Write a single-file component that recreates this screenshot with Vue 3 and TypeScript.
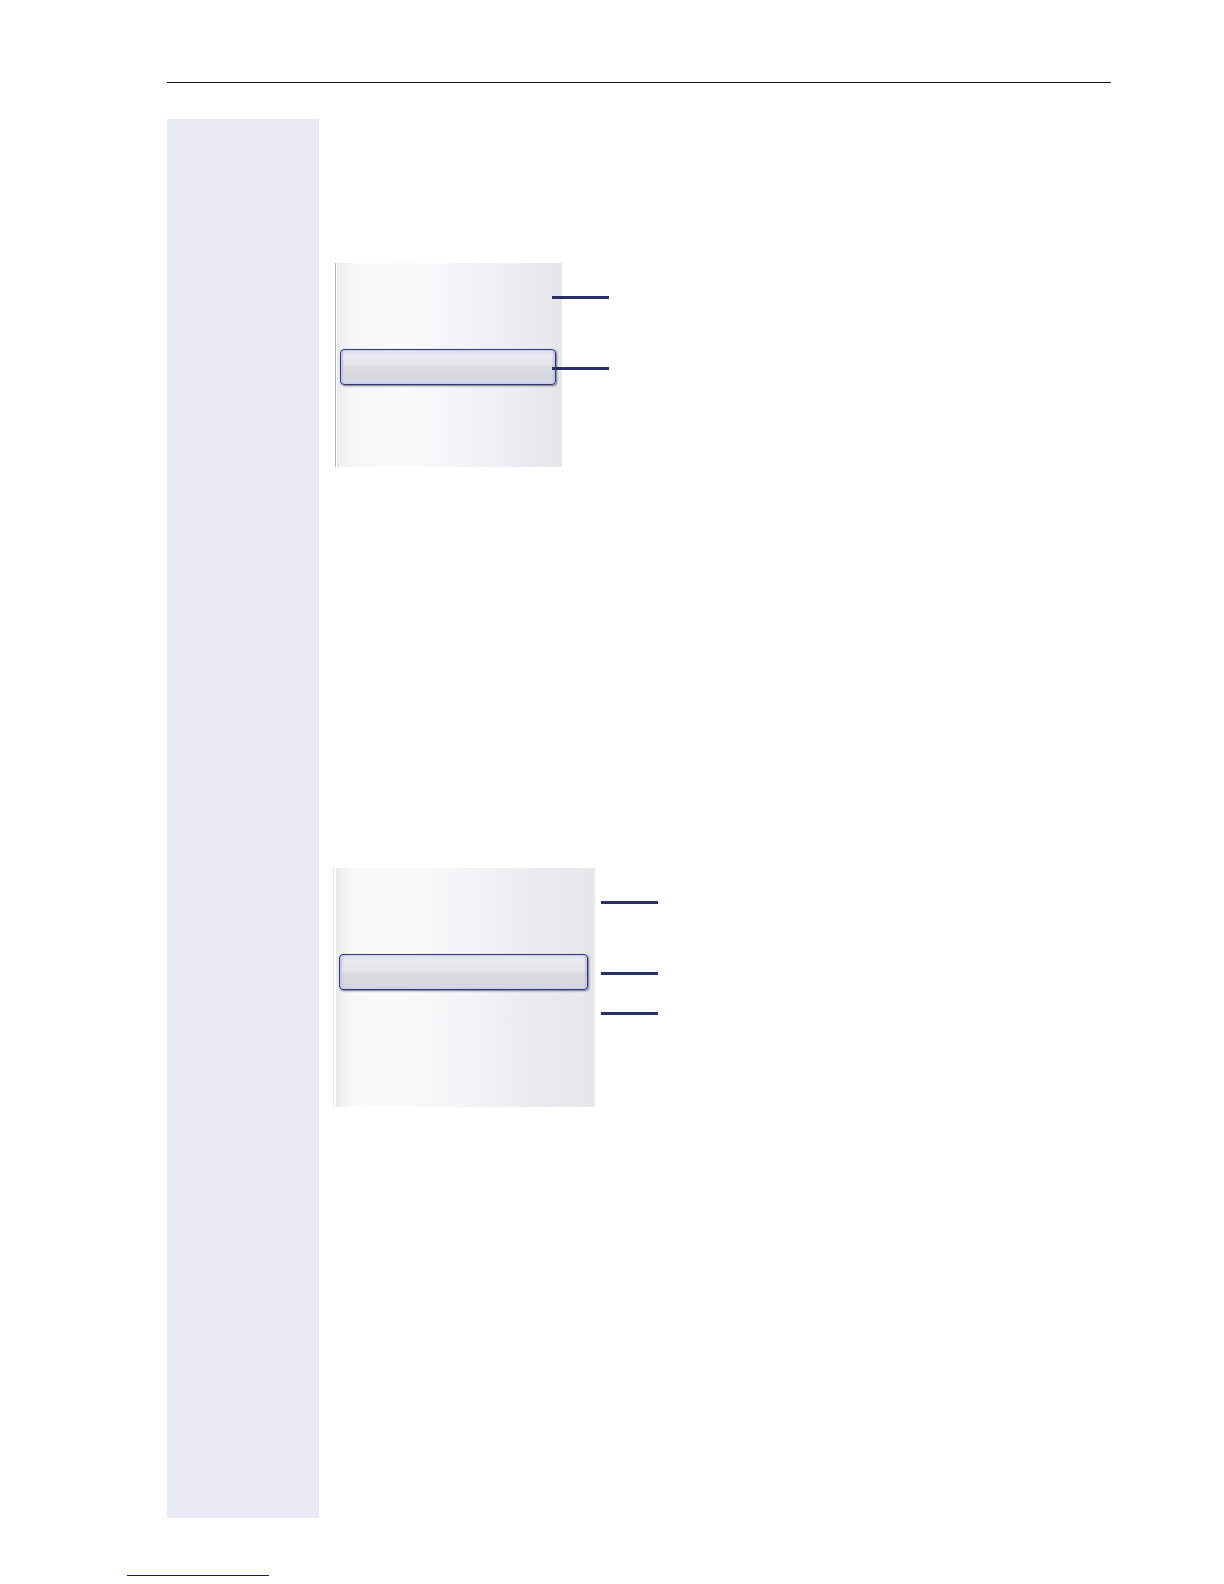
<script setup lang="ts">
interface MenuFigure {
  id: string
  callouts: string[]
}

const figures: MenuFigure[] = [
  { id: 'compact', callouts: ['heading', 'selected'] },
  { id: 'wide', callouts: ['heading', 'selected', 'entry'] },
]
</script>

<template>
  <div class="page">
    <hr class="rule" />
    <main class="body">
      <aside class="sidebar"></aside>
      <section class="content">
        <div v-for="figure in figures" :key="figure.id" class="figure" :class="figure.id">
          <div class="panel">
            <button type="button" class="item" aria-label="Selected entry"></button>
          </div>
          <div class="callouts">
            <span v-for="name in figure.callouts" :key="name" class="callout" :class="name"></span>
          </div>
        </div>
      </section>
    </main>
    <footer class="footer">
      <div class="footer-line"></div>
    </footer>
  </div>
</template>

<style>
body {
  margin: 0;
  background: #fff;
}
</style>

<style scoped>
.page {
  display: flex;
  flex-direction: column;
  min-height: 100vh;
  box-sizing: border-box;
  padding: 82px 113px 8px 127px;
  font-family: "Liberation Sans", Arial, sans-serif;
}

.rule {
  box-sizing: border-box;
  align-self: stretch;
  height: 1px;
  margin: 0 0 36px 40px;
  border: 0;
  background: #111116;
}

.body {
  display: flex;
  flex: 1;
  margin-left: 40px;
}

.sidebar {
  flex: 0 0 152px;
  background: #e8ebf4;
}

.content {
  flex: 1;
  padding-top: 144px;
}

.figure {
  display: flex;
  align-items: flex-start;
}

.panel {
  box-sizing: border-box;
  border-left: 1px solid #b2b2b4;
  background:
    linear-gradient(to right, #fff 0 1px, #e8e9ea 1px, #f1f2f3 7px, #f7f7f8 20px, #f9fafa 30%, #f5f6f7 50%, #eff0f3 72%, #e9eaed 88%, #e5e6e8 100%);
}

.item {
  display: block;
  box-sizing: border-box;
  width: 100%;
  height: 36px;
  padding: 0;
  border: 1px solid #34386e;
  border-radius: 4px;
  background: linear-gradient(to bottom, #dcdff2 0, #e8e9f1 5px, #e6e6ec 14px, #d9dadf 20px, #d8d9de 27px, #d3d7ee 34px);
  box-shadow: inset 2px 0 2px #bfc4ea, inset -2px 0 2px #bfc4ea, 1px 1px 2px #6c6e82;
}

.callouts {
  display: flex;
  flex-direction: column;
  padding-top: 33px;
}

.callout {
  width: 57px;
  height: 3px;
  background: #292e68;
}

.selected {
  margin-top: 68px;
}

.entry {
  margin-top: 37px;
}

.compact {
  margin-left: 16px;
}

.compact .panel {
  width: 227px;
  height: 204px;
  padding: 86px 6px 0 4px;
}

.compact .callouts {
  margin-left: -10px;
}

.wide {
  margin: 401px 0 0 14px;
}

.wide .panel {
  width: 262px;
  height: 239px;
  padding: 86px 7px 0 5px;
  border-left-color: #e2e3e4;
  background:
    linear-gradient(to right, #fff 0 2px, #e9e9ea 2px, #f0f1f2 9px, #f8f9f9 20px, #f9fafa 25%, #f4f5f6 48%, #eeeff1 66%, #e9eaed 82%, #e6e7e9 100%);
}

.wide .callouts {
  margin-left: 6px;
}

.footer {
  padding-top: 57px;
}

.footer-line {
  width: 142px;
  height: 1px;
  background: #12108c;
}
</style>
